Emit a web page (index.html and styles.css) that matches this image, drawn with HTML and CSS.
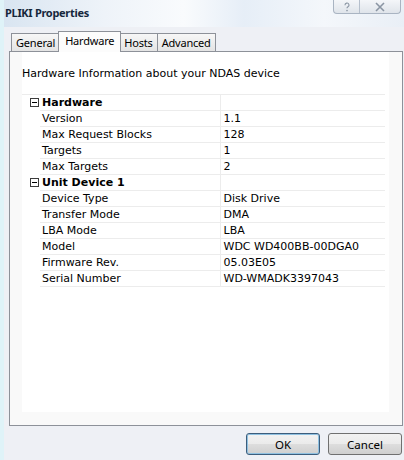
FILE: index.html
```html
<!DOCTYPE html>
<html lang="en">
<head>
    <meta charset="UTF-8">
    <title>PLIKI Properties</title>
    <link rel="stylesheet" href="styles.css">
</head>
<body>

    <div class="window">
        <div class="titlebar">
            <span class="title">PLIKI Properties</span>
            <div class="caption-btns">
                <span class="cap cap-help">
                    <svg width="10" height="10" viewBox="0 0 10 10"><path d="M3 3.2a2 2 0 1 1 3 1.6c-.7.4-1 .8-1 1.5" fill="none" stroke="#8a95a3" stroke-width="1.1"/><circle cx="5" cy="8.6" r=".8" fill="#8a95a3"/></svg>
                </span>
                <span class="cap cap-close">
                    <svg width="12" height="10" viewBox="0 0 12 10"><path d="M2 1l8 8M10 1L2 9" stroke="#8a95a3" stroke-width="1.6"/></svg>
                </span>
            </div>
        </div>

        <div class="client">
            <div class="tabs">
                <div class="tab">General</div>
                <div class="tab active">Hardware</div>
                <div class="tab">Hosts</div>
                <div class="tab">Advanced</div>
            </div>

            <div class="panel">
                <div class="panel-inner">
                    <p class="intro">Hardware Information about your NDAS device</p>

                    <table class="grid">
                        <colgroup>
                            <col class="col-gutter">
                            <col class="col-label">
                            <col>
                        </colgroup>
                        <tr class="group">
                            <td class="gutter"><span class="toggle"></span></td>
                            <td class="label">Hardware</td>
                            <td class="value"></td>
                        </tr>
                        <tr><td class="gutter"></td><td class="label">Version</td><td class="value">1.1</td></tr>
                        <tr><td class="gutter"></td><td class="label">Max Request Blocks</td><td class="value">128</td></tr>
                        <tr><td class="gutter"></td><td class="label">Targets</td><td class="value">1</td></tr>
                        <tr><td class="gutter"></td><td class="label">Max Targets</td><td class="value">2</td></tr>
                        <tr class="group">
                            <td class="gutter"><span class="toggle"></span></td>
                            <td class="label">Unit Device 1</td>
                            <td class="value"></td>
                        </tr>
                        <tr><td class="gutter"></td><td class="label">Device Type</td><td class="value">Disk Drive</td></tr>
                        <tr><td class="gutter"></td><td class="label">Transfer Mode</td><td class="value">DMA</td></tr>
                        <tr><td class="gutter"></td><td class="label">LBA Mode</td><td class="value">LBA</td></tr>
                        <tr><td class="gutter"></td><td class="label">Model</td><td class="value">WDC WD400BB-00DGA0</td></tr>
                        <tr><td class="gutter"></td><td class="label">Firmware Rev.</td><td class="value">05.03E05</td></tr>
                        <tr><td class="gutter"></td><td class="label">Serial Number</td><td class="value">WD-WMADK3397043</td></tr>
                    </table>
                </div>
            </div>

            <div class="buttons">
                <button class="btn btn-default">OK</button>
                <button class="btn">Cancel</button>
            </div>
        </div>
    </div>

</body>
</html>
```

FILE: styles.css
```css
* {
    box-sizing: border-box;
    margin: 0;
    padding: 0;
}

body {
    width: 404px;
    height: 460px;
    overflow: hidden;
    font-family: 'DejaVu Sans', sans-serif;
    font-size: 11px;
    color: #000;
    background: #eef0f5;
}

.window {
    height: 460px;
    border-left: 4px solid #dff3f8;
    display: flex;
    flex-direction: column;
}

.titlebar {
    height: 27px;
    display: flex;
    align-items: flex-start;
    justify-content: space-between;
    background: linear-gradient(90deg, #d9e5f1 0%, #eef3f9 25%, #f9fbfd 45%, #e6eef7 60%, #f4f7fb 80%, #e9eff6 100%);
}

.title {
    font-family: 'Noto Sans', sans-serif;
    font-weight: bold;
    font-size: 11px;
    letter-spacing: -0.3px;
    color: #16273c;
    padding: 5px 0 0 1px;
}

.caption-btns {
    display: flex;
    margin-right: 3px;
    border: 1px solid #a9b4c2;
    border-top: none;
    border-radius: 0 0 4px 4px;
    height: 14px;
    background: linear-gradient(#f4f6f9, #dfe4ea);
}

.cap {
    display: flex;
    align-items: center;
    justify-content: center;
}

.cap-help {
    width: 26px;
    border-right: 1px solid #b5bfcc;
}

.cap-close {
    width: 40px;
}

.client {
    flex: 1;
    display: flex;
    flex-direction: column;
    padding: 4px 1px 0 5px;
}

.tabs {
    display: flex;
    align-items: flex-end;
    height: 20px;
    padding-left: 2px;
    position: relative;
    z-index: 1;
    font-family: 'Noto Sans', sans-serif;
    font-size: 11px;
    letter-spacing: -0.2px;
}

.tab {
    height: 18px;
    padding: 0 4px;
    line-height: 17px;
    border: 1px solid #8d9199;
    border-bottom: none;
    margin-right: -1px;
    background: linear-gradient(#f7f7f7, #e4e4e4);
    color: #000;
}

.tab.active {
    height: 21px;
    margin: 0 -2px -1px -1px;
    padding: 0 6px;
    line-height: 17px;
    background: #fcfcfc;
    position: relative;
    z-index: 2;
}

.tab.active + .tab {
    margin-left: 0;
}

.panel {
    height: 375px;
    border: 1px solid #8d9199;
    background: #f9f9f9;
    padding: 0 13px 13px 12px;
}

.panel-inner {
    height: 100%;
    background: #fff;
    padding: 15px 0 0 0;
}

.intro {
    line-height: 13px;
    margin-bottom: 14px;
}

.grid {
    width: 363px;
    border-collapse: collapse;
    table-layout: fixed;
}

.col-gutter {
    width: 18px;
}

.col-label {
    width: 180px;
}

.grid td {
    height: 16px;
    line-height: 15px;
    white-space: nowrap;
    overflow: hidden;
    padding: 0;
}

.grid tr:first-child td {
    border-top: 1px solid #ececec;
}

.grid td.gutter {
    padding-left: 8px;
}

.grid td.label {
    padding-left: 2px;
    border-bottom: 1px solid #ececec;
}

.grid td.value {
    padding-left: 3px;
    border-left: 1px solid #ececec;
    border-bottom: 1px solid #ececec;
}

.group .label {
    font-weight: bold;
}

.toggle {
    display: block;
    width: 9px;
    height: 9px;
    border: 1px solid #3c3c3c;
    position: relative;
}

.toggle::after {
    content: '';
    position: absolute;
    left: 1px;
    right: 1px;
    top: 3px;
    height: 1px;
    background: #000;
}

.buttons {
    display: flex;
    justify-content: flex-end;
    gap: 8px;
    padding: 7px 1px 0 0;
}

.btn {
    width: 74px;
    height: 22px;
    font-family: 'Noto Sans', sans-serif;
    font-size: 11.5px;
    color: #000;
    border: 1px solid #707070;
    border-radius: 3px;
    background: linear-gradient(#f2f2f2 0%, #ebebeb 48%, #dddddd 52%, #cfcfcf 100%);
}

.btn-default {
    border-color: #3c5d7c;
    box-shadow: inset 0 0 0 1px #8fc0e0;
}
```
